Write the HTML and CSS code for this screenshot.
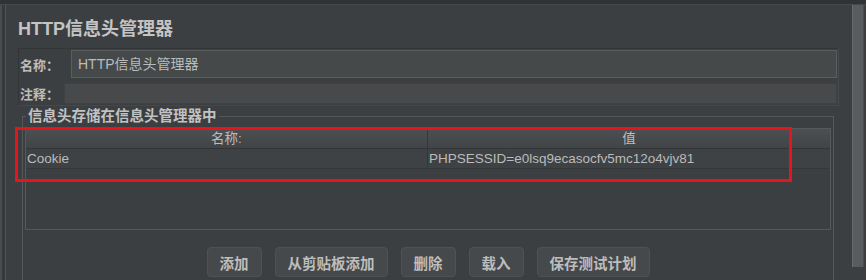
FILE: index.html
```html
<!DOCTYPE html>
<html lang="zh-CN">
<head>
<meta charset="utf-8">
<title>HTTP信息头管理器</title>
<link rel="stylesheet" href="styles.css">
</head>
<body>
<div class="window">
  <div class="topband"></div>
  <div class="frame">
    <div class="leftstrip"></div>
    <div class="main">
      <h1 class="title">HTTP信息头管理器</h1>
      <div class="namepanel">
        <div class="row row-name">
          <span class="label">名称：</span>
          <div class="field">HTTP信息头管理器</div>
        </div>
        <div class="row row-comment">
          <span class="label">注释：</span>
          <div class="field field-comment"></div>
        </div>
      </div>
      <fieldset class="group">
        <legend class="legend">信息头存储在信息头管理器中</legend>
        <div class="table">
          <div class="thead">
            <div class="th">名称:</div>
            <div class="th">值</div>
          </div>
          <div class="tr">
            <div class="td">Cookie</div>
            <div class="td">PHPSESSID=e0lsq9ecasocfv5mc12o4vjv81</div>
          </div>
        </div>
        <div class="buttons">
          <button class="btn">添加</button>
          <button class="btn">从剪贴板添加</button>
          <button class="btn">删除</button>
          <button class="btn">载入</button>
          <button class="btn">保存测试计划</button>
        </div>
      </fieldset>
    </div>
    <div class="vscroll"><div class="thumb"></div></div>
  </div>
  <div class="highlight"></div>
</div>
</body>
</html>
```

FILE: styles.css
```css
html, body {
  margin: 0;
  padding: 0;
  background: #3c3f41;
}

.window {
  position: relative;
  width: 866px;
  height: 280px;
  overflow: hidden;
  background: #3c3f41;
  font-family: "Liberation Sans", "Noto Sans CJK SC", sans-serif;
  color: #bbbbbb;
}

.topband {
  height: 4px;
  background: #303234;
  border-bottom: 1px solid #46494b;
}

.frame {
  display: flex;
  height: 275px;
}

.leftstrip {
  flex: 0 0 auto;
  width: 3px;
  background: #37393b;
  border-left: 2px solid #4a4d4f;
  border-right: 1px solid #505355;
}

.main {
  flex: 0 0 auto;
  width: 840px;
  box-sizing: border-box;
  padding: 12px 7px 0 12px;
}

.title {
  margin: 0;
  font-size: 18px;
  line-height: 24px;
  font-weight: bold;
  color: #c4c4c4;
}

.namepanel {
  margin-top: 7px;
  border: 1px solid #333537;
  border-bottom-color: #46494b;
  border-right-color: #4a4d4f;
  padding: 1px;
}

.row {
  display: flex;
  align-items: stretch;
}

.row-name {
  height: 28px;
}

.row-comment {
  margin-top: 5px;
  height: 21px;
}

.label {
  display: flex;
  align-items: center;
  font-size: 13px;
  font-weight: bold;
  color: #bdbdbd;
}

.row-name .label {
  width: 51px;
}

.row-comment .label {
  width: 44px;
}

.field {
  flex: 1;
  box-sizing: border-box;
  background: #45494a;
  border: 1px solid #5b5e60;
  padding-left: 6px;
  font-size: 14px;
  line-height: 26px;
  color: #bbbbbb;
}

.field-comment {
  background: #47494b;
  border-color: #3f4244;
}

.group {
  margin: 2px 5px 0 4px;
  padding: 4px 2px 0 2px;
  border: 1px solid #55585a;
  height: 200px;
  min-width: 0;
}

.legend {
  margin-left: 1px;
  padding: 0 2px;
  font-size: 14.5px;
  line-height: 16px;
  font-weight: bold;
  color: #c2c2c2;
}

.table {
  box-sizing: border-box;
  height: 102px;
  border: 1px solid #56595b;
  background: #3c3f41;
}

.thead {
  display: grid;
  grid-template-columns: 402px 1fr;
  height: 19px;
  background: linear-gradient(#4c4f51, #424547);
  border-bottom: 1px solid #333537;
}

.th {
  text-align: center;
  font-size: 13.5px;
  line-height: 19px;
  color: #bdbdbd;
}

.th:first-child {
  border-right: 1px solid #353739;
}

.tr {
  display: grid;
  grid-template-columns: 402px 1fr;
  height: 19px;
  background: #3f4244;
  border-bottom: 1px solid #353739;
}

.td {
  padding-left: 1px;
  font-size: 13.5px;
  line-height: 19px;
  color: #bbbbbb;
  white-space: nowrap;
}

.td:first-child {
  border-right: 1px solid #353739;
}

.buttons {
  display: flex;
  justify-content: center;
  gap: 13px;
  margin-top: 17px;
}

.btn {
  height: 30px;
  padding: 0 12px;
  background: #45494b;
  border: 1px solid #4f5254;
  border-radius: 4px;
  font-family: "Liberation Sans", "Noto Sans CJK SC", sans-serif;
  font-size: 14.5px;
  font-weight: bold;
  color: #bdbdbd;
}

.vscroll {
  flex: 0 0 auto;
  width: 20px;
  box-sizing: border-box;
  padding-left: 6px;
}

.thumb {
  width: 12px;
  height: 262px;
  box-sizing: border-box;
  background: #595c5e;
  border-left: 1px solid #676a6c;
  border-right: 1px solid #4a4d4f;
}

.highlight {
  position: absolute;
  left: 15px;
  top: 127px;
  width: 777px;
  height: 55px;
  box-sizing: border-box;
  border: 3px solid #e8141c;
}
```
